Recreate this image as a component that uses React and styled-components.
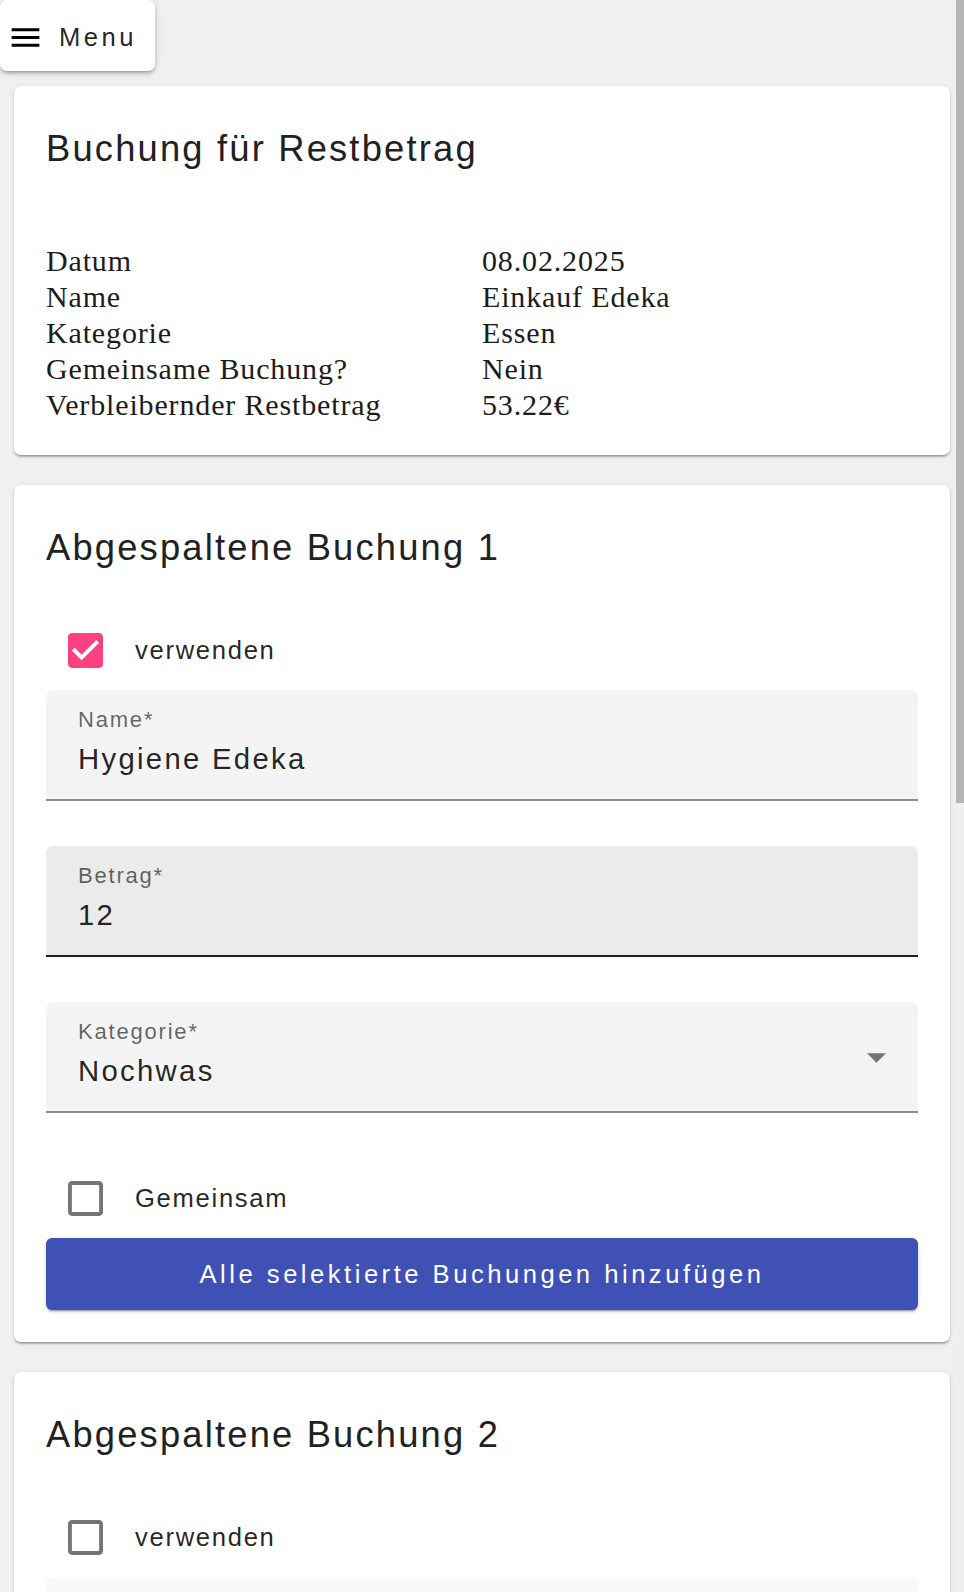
import React from 'react';
import styled, { createGlobalStyle } from 'styled-components';

const sans = '"Liberation Sans", Arial, Helvetica, sans-serif';

const GlobalStyle = createGlobalStyle`
  html, body { margin: 0; padding: 0; background: #f0f0f0; }
  body {
    font-family: ${sans};
    color: rgba(0, 0, 0, 0.87);
  }
  ::-webkit-scrollbar { width: 8px; }
  ::-webkit-scrollbar-track { background: #efefef; }
  ::-webkit-scrollbar-thumb { background: #b4b4b4; }
`;

const Page = styled.div`
  display: flex;
  flex-direction: column;
  align-items: flex-start;
`;

const ScrollRail = styled.div`
  position: fixed;
  top: 0;
  right: 0;
  width: 8px;
  height: 100vh;
  background: #efefef;
  z-index: 10;
`;

const ScrollThumb = styled.div`
  height: 803px;
  background: #b4b4b4;
`;

const MenuButton = styled.button`
  display: flex;
  align-items: center;
  gap: 15px;
  height: 71px;
  width: 155px;
  padding: 3px 0 0 7px;
  margin: 0 0 15px;
  border: none;
  border-radius: 7px;
  background: #fff;
  color: rgba(0, 0, 0, 0.87);
  font-family: ${sans};
  font-size: 25.6px;
  letter-spacing: 3.5px;
  box-shadow: 0 3px 3px -2px rgba(0, 0, 0, 0.2), 0 3px 4px 0 rgba(0, 0, 0, 0.14),
    0 1px 8px 0 rgba(0, 0, 0, 0.12);
  cursor: pointer;
`;

const CardList = styled.main`
  align-self: stretch;
  display: flex;
  flex-direction: column;
  gap: 30px;
  padding: 0 14px 40px 14px;
`;

const Card = styled.section`
  background: #fff;
  border-radius: 7px;
  padding: 32px;
  display: flex;
  flex-direction: column;
  box-shadow: 0 3px 2px -2px rgba(0, 0, 0, 0.25), 0 2px 2px 0 rgba(0, 0, 0, 0.14),
    0 1px 5px 0 rgba(0, 0, 0, 0.12);
`;

const Title = styled.h2`
  margin: 9px 0 0;
  font-size: 36.3px;
  line-height: 44px;
  font-weight: 400;
  letter-spacing: 2.2px;
  color: #212121;
`;

const InfoGrid = styled.dl`
  display: grid;
  grid-template-columns: 1fr 1fr;
  margin: 72px 0 0;
  font-family: "Liberation Serif", "Times New Roman", serif;
  font-size: 30px;
  line-height: 36px;
  letter-spacing: 0.85px;
  color: #1c1c1c;
`;

const InfoTerm = styled.dt`
  margin: 0;
`;

const InfoValue = styled.dd`
  margin: 0;
`;

const CheckRow = styled.label`
  display: flex;
  align-items: center;
  gap: 32px;
  height: 80px;
  padding-left: 22px;
  margin-top: ${(p) => p.$mt || 0}px;
  font-size: 25.6px;
  letter-spacing: 1.7px;
  color: rgba(0, 0, 0, 0.87);
`;

const Field = styled.div`
  display: flex;
  box-sizing: border-box;
  height: 111px;
  padding: 17px 32px 0;
  margin-top: ${(p) => p.$mt || 0}px;
  background: ${(p) => (p.$hover ? '#ebebeb' : p.$muted ? '#f9f9f9' : '#f4f4f4')};
  border-radius: 7px 7px 0 0;
  border-bottom: 2px solid ${(p) => (p.$hover ? '#1f1f1f' : '#8e8e8e')};
`;

const FieldBody = styled.div`
  flex: 1;
  display: flex;
  flex-direction: column;
`;

const FieldLabel = styled.span`
  font-size: 22px;
  line-height: 26px;
  letter-spacing: 1.8px;
  color: rgba(0, 0, 0, 0.6);
`;

const FieldValue = styled.span`
  margin-top: 9px;
  font-size: 29.3px;
  line-height: 34px;
  letter-spacing: 2.3px;
  color: rgba(0, 0, 0, 0.87);
`;

const Arrow = styled.svg`
  align-self: flex-start;
  margin-top: 34px;
  width: 19px;
  height: 10px;
  fill: #757575;
`;

const SubmitButton = styled.button`
  height: 72px;
  border: none;
  border-radius: 6px;
  background: #3f51b5;
  color: #fff;
  font-family: ${sans};
  font-size: 25.6px;
  letter-spacing: 3.5px;
  box-shadow: 0 3px 1px -2px rgba(0, 0, 0, 0.2), 0 2px 2px 0 rgba(0, 0, 0, 0.14),
    0 1px 5px 0 rgba(0, 0, 0, 0.12);
  cursor: pointer;
`;

const MenuIcon = () => (
  <svg width="37" height="37" viewBox="0 0 24 24" fill="#000">
    <path d="M3 18h18v-2H3v2zm0-5h18v-2H3v2zm0-7v2h18V6H3z" />
  </svg>
);

const CheckBox = ({ checked }) =>
  checked ? (
    <svg width="35" height="35" viewBox="3 3 18 18">
      <path
        fill="#ff4081"
        d="M19 3H5c-1.11 0-2 .9-2 2v14c0 1.1.89 2 2 2h14c1.11 0 2-.9 2-2V5c0-1.1-.89-2-2-2z"
      />
      <path fill="#fff" d="M10 17l-5-5 1.41-1.41L10 14.17l7.59-7.59L19 8l-9 9z" />
    </svg>
  ) : (
    <svg width="35" height="35" viewBox="3 3 18 18">
      <path
        fill="#757575"
        d="M19 5v14H5V5h14m0-2H5c-1.1 0-2 .9-2 2v14c0 1.1.9 2 2 2h14c1.1 0 2-.9 2-2V5c0-1.1-.9-2-2-2z"
      />
    </svg>
  );

const info = [
  ['Datum', '08.02.2025'],
  ['Name', 'Einkauf Edeka'],
  ['Kategorie', 'Essen'],
  ['Gemeinsame Buchung?', 'Nein'],
  ['Verbleibernder Restbetrag', '53.22€'],
];

const splits = [
  { n: 1, use: true, name: 'Hygiene Edeka', amount: '12', cat: 'Nochwas', hover: 'amount' },
  { n: 2, use: false, name: '', amount: '', cat: '', muted: true },
  { n: 3, use: false, name: '', amount: '', cat: '', muted: true },
];

const SplitCard = ({ s }) => (
  <Card>
    <Title>Abgespaltene Buchung {s.n}</Title>
    <CheckRow $mt={40}>
      <CheckBox checked={s.use} />
      verwenden
    </CheckRow>
    <Field $muted={s.muted}>
      <FieldBody>
        <FieldLabel>Name*</FieldLabel>
        <FieldValue>{s.name || '\u00a0'}</FieldValue>
      </FieldBody>
    </Field>
    <Field $mt={45} $hover={s.hover === 'amount'} $muted={s.muted}>
      <FieldBody>
        <FieldLabel>Betrag*</FieldLabel>
        <FieldValue>{s.amount || '\u00a0'}</FieldValue>
      </FieldBody>
    </Field>
    <Field $mt={45} $muted={s.muted}>
      <FieldBody>
        <FieldLabel>Kategorie*</FieldLabel>
        <FieldValue>{s.cat || '\u00a0'}</FieldValue>
      </FieldBody>
      <Arrow viewBox="7 10 10 5">
        <path d="M7 10l5 5 5-5z" />
      </Arrow>
    </Field>
    <CheckRow $mt={45}>
      <CheckBox checked={false} />
      Gemeinsam
    </CheckRow>
    <SubmitButton>Alle selektierte Buchungen hinzufügen</SubmitButton>
  </Card>
);

export default function App() {
  return (
    <>
      <GlobalStyle />
      <ScrollRail aria-hidden="true">
        <ScrollThumb />
      </ScrollRail>
      <Page>
        <MenuButton>
          <MenuIcon />
          Menu
        </MenuButton>
        <CardList>
          <Card>
            <Title>Buchung für Restbetrag</Title>
            <InfoGrid>
              {info.map(([k, v]) => (
                <React.Fragment key={k}>
                  <InfoTerm>{k}</InfoTerm>
                  <InfoValue>{v}</InfoValue>
                </React.Fragment>
              ))}
            </InfoGrid>
          </Card>
          {splits.map((s) => (
            <SplitCard key={s.n} s={s} />
          ))}
        </CardList>
      </Page>
    </>
  );
}
